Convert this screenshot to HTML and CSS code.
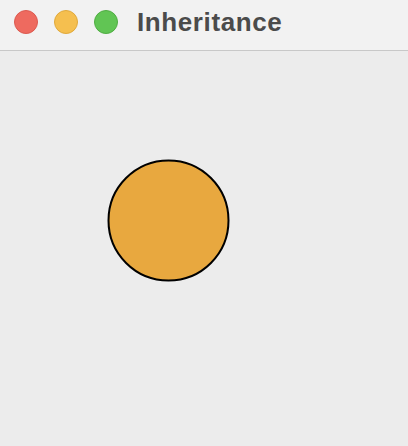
FILE: index.html
```html
<!DOCTYPE html>
<html>
<head>
<meta charset="utf-8">
<link rel="stylesheet" href="styles.css">
</head>
<body>
<div class="window">
  <div class="titlebar">
    <div class="lights">
      <span class="light red"></span>
      <span class="light yellow"></span>
      <span class="light green"></span>
    </div>
    <div class="title">Inheritance</div>
  </div>
  <div class="content">
    <svg class="canvas" width="408" height="395" viewBox="0 0 408 395">
      <circle cx="168.5" cy="169.5" r="60" fill="#e8a83f" stroke="#000" stroke-width="2"/>
    </svg>
  </div>
</div>
</body>
</html>
```
FILE: styles.css
```css
html, body {
  margin: 0;
  padding: 0;
  background: #ececec;
}
.window {
  width: 408px;
  height: 446px;
  display: flex;
  flex-direction: column;
  overflow: hidden;
}
.titlebar {
  height: 50px;
  background: #f2f2f2;
  border-bottom: 1px solid #c8c8c8;
  display: flex;
  align-items: center;
  flex-shrink: 0;
}
.lights {
  display: flex;
  gap: 16px;
  padding-left: 14px;
  margin-top: -6px;
}
.light {
  width: 24px;
  height: 24px;
  border-radius: 50%;
  box-sizing: border-box;
}
.red { background: #ee6a5f; border: 1px solid #dc5a50; }
.yellow { background: #f5bf4f; border: 1px solid #e0a93c; }
.green { background: #61c554; border: 1px solid #50ad43; }
.title {
  margin-left: 19px;
  margin-top: -6px;
  font-family: "Liberation Sans", Arial, sans-serif;
  font-weight: bold;
  font-size: 26px;
  letter-spacing: 0.6px;
  color: #4b4b4b;
}
.content {
  flex: 1;
  background: #ececec;
}
.canvas {
  display: block;
}
```
